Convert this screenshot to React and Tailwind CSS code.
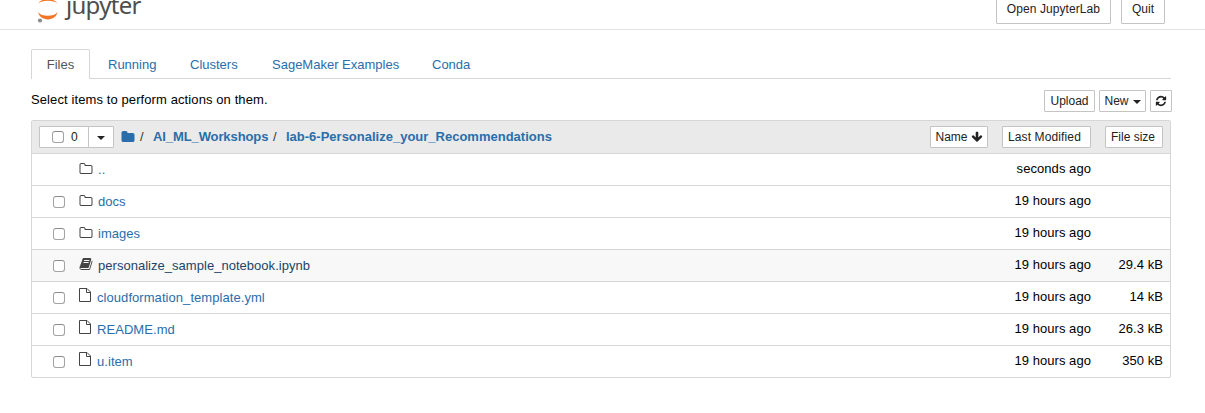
import React from "react";

const FOLDER_O =
  "M1600 1312V608q0-40-28-68t-68-28H800q-40 0-68-28t-28-68v-64q0-40-28-68t-68-28H288q-40 0-68 28t-28 68v960q0 40 28 68t68 28h1216q40 0 68-28t28-68zm128-704v704q0 92-66 158t-158 66H288q-92 0-158-66t-66-158V352q0-92 66-158t158-66h320q92 0 158 66t66 158v32h672q92 0 158 66t66 158z";
const FOLDER =
  "M1728 608v704q0 92-66 158t-158 66h-1216q-92 0-158-66t-66-158v-960q0-92 66-158t158-66h320q92 0 158 66t66 158v32h672q92 0 158 66t66 158z";
const BOOK =
  "M1703 478q40 57 18 129l-275 906q-19 64-76.5 107.5t-122.5 43.5h-923q-77 0-148.5-53.5t-99.5-131.5q-24-67-2-127 0-4 3-27t4-37q1-8-3-21.5t-3-19.5q2-11 8-21t16.500-23.500 16.500-23.500q23-38 45-91.500t30-91.500q3-10 .5-30t-.5-28q3-11 17-28t17-23q21-36 42-92t25-90q1-9-2.500-32t.5-28q4-13 22-30.500t22-22.500q19-26 42.500-84.500t27.500-96.500q1-8-3-25.500t-2-26.500q2-8 9-18t18-23 17-21q8-12 16.500-30.500t15-35 16-36 19.500-32 26.500-23.500 36-11.500 47.500 5.500l-1 3q38-9 51-9h761q74 0 114 56t18 130l-274 906q-36 119-71.500 153.500t-128.500 34.500h-869q-27 0-38 15-11 16-1 43 24 70 144 70h923q29 0 56-15.500t35-41.500l300-987q7-22 5-57 38 15 59 43zm-1064 2q-4 13 2 22.500t20 9.500h608q13 0 25.500-9.500t16.500-22.500l21-64q4-13-2-22.500t-20-9.500h-608q-13 0-25.500 9.500t-16.500 22.500zm-83 256q-4 13 2 22.500t20 9.500h608q13 0 25.500-9.500t16.500-22.500l21-64q4-13-2-22.500t-20-9.500h-608q-13 0-25.500 9.500t-16.500 22.500z";
const REFRESH =
  "M1639 1056q0 5-1 7-64 268-268 434.500t-478 166.500q-146 0-282.500-55t-243.500-157l-129 129q-19 19-45 19t-45-19-19-45v-448q0-26 19-45t45-19h448q26 0 45 19t19 45-19 45l-137 137q71 66 161 102t187 36q134 0 250-65t186-179q11-17 53-117 8-23 30-23h192q13 0 22.500 9.500t9.500 22.500zm25-800v448q0 26-19 45t-45 19h-448q-26 0-45-19t-19-45 19-45l138-138q-148-137-349-137-134 0-250 65t-186 179q-11 17-53 117-8 23-30 23h-199q-13 0-22.500-9.500t-9.500-22.500v-7q65-268 270-434.500t480-166.500q146 0 284 55.500t245 156.500l130-129q19-19 45-19t45 19 19 45z";
const ARROW_DOWN =
  "M1675 832q0 53-37 90l-651 652q-39 37-91 37-53 0-90-37l-651-652q-38-36-38-90 0-53 38-91l74-75q39-37 91-37 53 0 90 37l294 294v-704q0-52 38-90t90-38h128q52 0 90 38t38 90v704l294-294q37-37 90-37 52 0 91 37l75 75q37 39 37 91z";

function Glyph({ d, className }) {
  return (
    <svg viewBox="0 0 1792 1792" fill="currentColor" className={"block shrink-0 " + className}>
      <path d={d} />
    </svg>
  );
}

function FileGlyph() {
  return (
    <svg viewBox="0 0 12 14" fill="none" stroke="currentColor" className="block h-[14px] w-[12px] shrink-0">
      <path d="M.5.5H8L11.500 4V13.500H.5ZM7.500.5V4.500H11.500" />
    </svg>
  );
}

function Caret({ className = "" }) {
  return (
    <svg viewBox="0 0 8 4" fill="currentColor" className={"block h-[4px] w-[8px] shrink-0 " + className}>
      <path d="M0 0H8L4 4Z" />
    </svg>
  );
}

function Checkbox() {
  return <span className="block size-[12px] shrink-0 rounded-[3px] border border-[#a3a3a3] border-t-[#8c8c8c] bg-white" />;
}

function Button({ className = "", children }) {
  return (
    <button className={"flex h-[22px] items-center rounded-[1px] border border-[#c4c4c4] bg-white text-[12px] leading-[18px] whitespace-nowrap text-[#222] " + className}>
      {children}
    </button>
  );
}

function Logo() {
  return (
    <svg viewBox="0 0 24 24" className="block h-[24px] w-[24px] shrink-0">
      <path d="M1 12.300C3 14.800 6.500 15.800 10.800 15.800S18.600 14.800 20.600 12.300C19.400 16.600 15.600 19.400 10.800 19.400S2.200 16.600 1 12.300Z" fill="#f37626" />
      <path d="M1 3.800C2.600 1 6 -1 10.800 -1S19 1 20.600 3.800C18.600 1.600 15 .8 10.800 .8S3 1.600 1 3.800Z" fill="#f37626" />
      <circle cx="3" cy="20.500" r="2.100" fill="#8a8a8a" />
    </svg>
  );
}

const rows = [
  { name: "..", kind: "folder", time: "seconds ago", up: true },
  { name: "docs", kind: "folder", time: "19 hours ago" },
  { name: "images", kind: "folder", time: "19 hours ago" },
  { name: "personalize_sample_notebook.ipynb", kind: "book", time: "19 hours ago", size: "29.4 kB", active: true },
  { name: "cloudformation_template.yml", kind: "file", time: "19 hours ago", size: "14 kB" },
  { name: "README.md", kind: "file", time: "19 hours ago", size: "26.3 kB" },
  { name: "u.item", kind: "file", time: "19 hours ago", size: "350 kB" },
];

function Row({ name, kind, time, size, up, active }) {
  return (
    <div className={"flex h-[32px] items-center border-b border-[#d6d6d6] pr-[7px] pl-[21px] last:h-[31px] last:border-b-0 " + (active ? "bg-[#f8f8f8]" : "")}>
      <div className="w-[26px] pt-px">{!up && <Checkbox />}</div>
      <div className={"w-[19px] text-[#444] " + (kind === "file" ? "-mt-[5px]" : kind === "book" ? "-mt-[3px]" : "-mt-[2px]")}>
        {kind === "folder" && <Glyph d={FOLDER_O} className="size-[14px]" />}
        {kind === "book" && <Glyph d={BOOK} className="size-[14px]" />}
        {kind === "file" && <FileGlyph />}
      </div>
      <a className={"flex-1 text-[13px] leading-[18px] " + (kind === "file" ? "-ml-px tracking-[0.06px] " : "tracking-[0.03px] ") + (active ? "text-[#1c4468]" : "text-[#296eaa]")}>{name}</a>
      <span className="-mt-[2px] text-[13px] leading-[18px] tracking-[0.06px]">{time}</span>
      <span className="-mt-[2px] w-[72px] text-right text-[13px] leading-[18px] tracking-[0.06px]">{size}</span>
    </div>
  );
}

export default function App() {
  return (
    <div className="h-[413px] w-[1205px] overflow-hidden bg-white font-['Liberation_Sans',Arial,sans-serif] text-[13px] text-black">
      <header className="flex h-[30px] items-start justify-between border-b border-[#e2e2e2] pr-[40px] pl-[37px]">
        <div className="flex">
          <Logo />
          <span className="-mt-[12px] ml-[5px] font-['Noto_Sans',sans-serif] text-[24px] leading-[34px] tracking-[-0.7px] text-[#4e4e4e]">jupyter</span>
        </div>
        <div className="-mt-[6px] flex gap-[10px]">
          <Button className="h-[30px] w-[115px] justify-center tracking-[0.08px]">Open JupyterLab</Button>
          <Button className="h-[30px] w-[44px] justify-center">Quit</Button>
        </div>
      </header>

      <main className="pt-[19px] pr-[34px] pl-[31px]">
        <nav className="flex h-[30px] border-b border-[#d6d6d6] text-[13px] leading-[32px] text-[#296eaa]">
          <a className="h-[30px] w-[59px] rounded-t-[2px] border border-b-0 border-[#d6d6d6] bg-white text-center leading-[30px] text-[#555]">Files</a>
          <a className="ml-[18px] w-[82px]">Running</a>
          <a className="w-[82px]">Clusters</a>
          <a className="w-[160px]">SageMaker Examples</a>
          <a>Conda</a>
        </nav>

        <div className="flex h-[41px] items-start justify-between pt-[11px]">
          <p className="leading-[20px] tracking-[0.1px]">Select items to perform actions on them.</p>
          <div className="-mr-px flex">
            <Button className="w-[51px] justify-center">Upload</Button>
            <Button className="ml-[4px] w-[47px] justify-center gap-[4px]">
              New <Caret className="mt-[2px]" />
            </Button>
            <Button className="ml-[4px] w-[22px] justify-center">
              <Glyph d={REFRESH} className="size-[12px]" />
            </Button>
          </div>
        </div>

        <section className="rounded-[2px] border border-[#d6d6d6]">
          <div className="flex h-[33px] items-center border-b border-[#d6d6d6] bg-[#eaeaea] pr-[7px] pl-[7px]">
            <Button className="w-[50px] gap-[7px] rounded-r-none pl-[12px]">
              <Checkbox />0
            </Button>
            <Button className="-ml-px w-[26px] justify-center rounded-l-none">
              <Caret className="mt-[2px]" />
            </Button>
            <div className="-mt-px flex flex-1 items-center pl-[7px] text-[13px] leading-[18px] font-bold text-[#296eaa]">
              <Glyph d={FOLDER} className="size-[14px]" />
              <span className="w-[18px] pl-[5px] font-normal text-[#333]">/</span>
              <a className="w-[120px] tracking-[-0.1px]">AI_ML_Workshops</a>
              <span className="w-[13px] font-normal text-[#333]">/</span>
              <a>lab-6-Personalize_your_Recommendations</a>
            </div>
            <Button className="w-[58px] justify-center gap-[3px]">
              Name <Glyph d={ARROW_DOWN} className="size-[12px]" />
            </Button>
            <Button className="ml-[14px] w-[89px] pl-[5px] tracking-[0.12px]">Last Modified</Button>
            <Button className="ml-[14px] w-[58px] pl-[5px]">File size</Button>
          </div>
          {rows.map((row) => (
            <Row key={row.name} {...row} />
          ))}
        </section>
      </main>
    </div>
  );
}
